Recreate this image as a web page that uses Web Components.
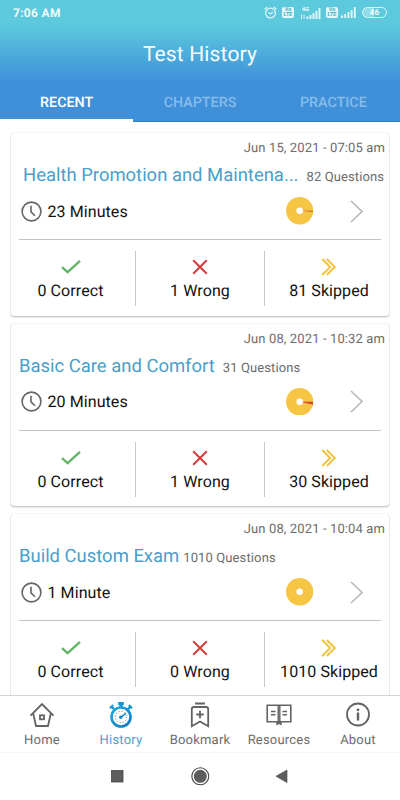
<!DOCTYPE html>
<html lang="en">
<head>
<meta charset="utf-8">
<meta name="viewport" content="width=device-width, initial-scale=1">
<title>Test History</title>
<style>
  html, body { height: 100%; }
  body {
    margin: 0;
    overflow: hidden;
    background: #fff;
    color: #111;
    font-family: Roboto, "Noto Sans", sans-serif;
    text-rendering: geometricPrecision;
  }
</style>
</head>
<body>
<history-app></history-app>

<script>
const tests = [
  {date: 'Jun 15, 2021 - 07:05 am', title: 'Health Promotion and Maintena...', questions: 82, time: '23 Minutes', correct: 0, wrong: 1, skipped: 81, full: true},
  {date: 'Jun 08, 2021 - 10:32 am', title: 'Basic Care and Comfort', questions: 31, time: '20 Minutes', correct: 0, wrong: 1, skipped: 30},
  {date: 'Jun 08, 2021 - 10:04 am', title: 'Build Custom Exam', questions: 1010, time: '1 Minute', correct: 0, wrong: 0, skipped: 1010, tight: true}
];

const icons = {
  correct: '<svg width="20" height="16" viewBox="0 0 20 16" fill="none" stroke="#61b565" stroke-width="2.3"><path d="M1 8.2 6.6 13.2 19 1.8"/></svg>',
  wrong: '<svg width="16" height="16" viewBox="0 0 16 16" fill="none" stroke="#d83a3a" stroke-width="2"><path d="M1.2 1.2 14.8 14.8M14.8 1.2 1.2 14.8"/></svg>',
  skipped: '<svg width="16" height="18" viewBox="0 0 16 18" fill="none" stroke="#f0c23e" stroke-width="1.9"><path d="M1.2 1 9.2 9 1.2 17M5.8 1 13.8 9 5.8 17"/></svg>',
  home: '<svg width="26" height="26" viewBox="0 0 26 26" fill="none" stroke="#636363" stroke-width="1.8"><path d="M1.5 13.6 13 2 24.5 13.6M4.2 11.5 7 24H19L21.8 11.5"/><rect x="11" y="13.3" width="4" height="4"/></svg>',
  history: `<svg width="26" height="28" viewBox="0 0 26 28" fill="none">
      <defs><linearGradient id="g" x1="0" y1="0" x2="1" y2="1"><stop offset="0" stop-color="#25a9e0"/><stop offset="1" stop-color="#0b78bd"/></linearGradient></defs>
      <path d="M10.2 1H15.8V4H14.7V6.2H11.3V4H10.2Z" fill="#1896d3"/>
      <path d="m2 7.3 3.2-3.2M24 7.3l-3.2-3.2M4 6l2.2 2.4M22 6l-2.2 2.4" stroke="#1896d3" stroke-width="2.2"/>
      <circle cx="13" cy="16" r="9.5" fill="#fff" stroke="url(#g)" stroke-width="2.6"/>
      <circle cx="13" cy="16" r="5.7" stroke="#2287be" stroke-width="1" stroke-dasharray="1 1.98"/>
      <path d="m12.6 16.3 5.3-3.9" stroke="#1687c7" stroke-width="1.5"/><circle cx="12.7" cy="16.3" r="1.7" fill="#1687c7"/></svg>`,
  bookmark: '<svg width="20" height="26" viewBox="0 0 20 26" fill="none" stroke="#636363" stroke-width="1.8"><path d="M5 1.5H15M1.8 24.3V7.3Q1.8 5 4 5H16Q18.2 5 18.2 7.3V24.3L10 19.5ZM10 8.8V16.2M6.3 12.5H13.7"/></svg>',
  resources: '<svg width="26" height="26" viewBox="0 0 26 26" fill="none" stroke="#636363" stroke-width="1.6"><path d="M1.2 3.2H24.8V19.8H1.2ZM13 3.2V19.8"/><path d="M12 3.5V20M14 3.5V20" stroke-width="1"/><path d="M5 9.5H9.5M5 12.8H9.5M16.5 9.5H21M16.5 12.8H21" stroke-width="1.4"/><path d="M10.3 20H15.7V23.6L13 22 10.3 23.6Z" fill="#636363" stroke="none"/></svg>',
  about: '<svg width="26" height="26" viewBox="0 0 26 26" fill="none" stroke="#636363" stroke-width="1.8"><circle cx="13" cy="12.5" r="11"/><path d="M13 11.5V17.5" stroke-width="2.4" stroke-linecap="round"/><circle cx="13" cy="7.8" r="1.4" fill="#636363" stroke="none"/></svg>'
};

class StatusBar extends HTMLElement {
  constructor() {
    super();
    this.attachShadow({mode: 'open'}).innerHTML = `
      <style>
        :host { display: flex; align-items: center; justify-content: space-between; height: 25px; padding: 0 13px; color: #effcff; }
        .time { font-size: 12px; font-weight: 700; letter-spacing: .3px; }
        .icons { display: flex; align-items: center; }
        svg { display: block; }
        .volte { display: flex; flex-direction: column; box-sizing: border-box; width: 12px; height: 11px; padding-top: 1px; border-radius: 2px; background: #e2f8fb; color: #43adbd; font-size: 5.5px; line-height: 5px; font-weight: 700; text-align: center; }
        .net { display: flex; flex-direction: column; width: 21px; margin: 0 5px 0 6px; }
        .net span { font-size: 5.5px; line-height: 6px; height: 4px; padding-left: 2px; font-weight: 700; }
        .net svg { margin-top: -3px; }
        .bars { margin-left: 3px; }
        .battery { box-sizing: border-box; width: 25px; height: 11px; margin-left: 6px; border: 1px solid #e2f8fb; border-radius: 6px; background: linear-gradient(90deg, #8fdce8 46%, transparent 46%); font-size: 8.5px; line-height: 11px; font-weight: 700; text-align: center; }
      </style>
      <span class="time">7:06 AM</span>
      <div class="icons">
        <svg width="13" height="13" viewBox="0 0 13 13" fill="none" stroke="#e2f8fb" stroke-width="1.2"><circle cx="6.5" cy="7" r="4.9"/><path d="M.6 3.2 3.4.9M12.4 3.2 9.6.9M4.4 6.3 6.5 8 8.8 6.3"/></svg>
        <span class="volte" style="margin-left:5px"><span>Vo</span><span>LTE</span></span>
        <div class="net">
          <span>4G</span>
          <svg width="21" height="11" viewBox="0 0 21 11" stroke="#e2f8fb"><path d="M1.5 6.5V11M4 6.5V11" stroke-width="1"/><path d="M7.5 8.5V11M10.5 7V11M13.5 5V11M16.5 3V11M19.5 0V11" stroke-width="1.9"/></svg>
        </div>
        <span class="volte"><span>Vo</span><span>LTE</span></span>
        <svg class="bars" width="15" height="11" viewBox="0 0 15 11" stroke="#e2f8fb"><path d="M1 8.5V11M4.2 7V11M7.4 5V11M10.6 3V11M13.8 0V11" stroke-width="1.9"/></svg>
        <span class="battery">46</span>
      </div>`;
  }
}
customElements.define('status-bar', StatusBar);

class AppHeader extends HTMLElement {
  constructor() {
    super();
    this.attachShadow({mode: 'open'}).innerHTML = `
      <style>
        :host { display: flex; flex-direction: column; height: 122px; flex: none; background: linear-gradient(#5cc9dc 0, #5cc9dc 25px, #3f90d9 82px); }
        h1 { margin: 0; height: 55px; line-height: 60px; text-align: center; color: #f4fcff; font-size: 21px; font-weight: 400; letter-spacing: .15px; }
        nav { display: grid; grid-template-columns: repeat(3, 1fr); flex: 1; }
        nav span { display: flex; align-items: center; justify-content: center; padding-top: 5px; border-bottom: 1px solid #2f7fc6; color: #85bce9; font-size: 14.3px; font-weight: 500; }
        nav .active { padding-top: 7px; border-bottom: 3px solid #fff; color: #fff; }
      </style>
      <status-bar></status-bar>
      <h1>Test History</h1>
      <nav><span class="active">RECENT</span><span>CHAPTERS</span><span>PRACTICE</span></nav>`;
  }
}
customElements.define('app-header', AppHeader);

class ResultStat extends HTMLElement {
  connectedCallback() {
    this.attachShadow({mode: 'open'}).innerHTML = `
      <style>
        :host { display: flex; flex-direction: column; align-items: center; height: 55px; box-sizing: border-box; font-size: 16px; letter-spacing: .08px; white-space: nowrap; }
        .icon { display: flex; align-items: center; height: 32px; }
        .label { line-height: 16px; }
      </style>
      <div class="icon">${icons[this.getAttribute('type')]}</div>
      <div class="label"><slot></slot></div>`;
  }
}
customElements.define('result-stat', ResultStat);

class HistoryCard extends HTMLElement {
  constructor() {
    super();
    this._shadowRoot = this.attachShadow({mode: 'open'});
  }

  set test(test) {
    this._test = test;
    this.render();
  }

  render() {
    const t = this._test;
    // the wrong slice starts at three o'clock and runs clockwise
    const slice = t.wrong / t.questions * 2 * Math.PI;
    const x = 13.7 + 13.7 * Math.cos(slice);
    const y = 13.7 + 13.7 * Math.sin(slice);
    this._shadowRoot.innerHTML = `
      <style>
        :host { display: flex; flex-direction: column; box-sizing: border-box; flex: none; height: 182.5px; border-radius: 3px; background: #fff; box-shadow: 0 1px 2px rgba(0, 0, 0, .28), 0 0 1px rgba(0, 0, 0, .2); }
        .date { height: 30px; line-height: 32px; padding-right: 4px; text-align: right; color: #6c6c6c; font-size: 13px; letter-spacing: .12px; }
        .head { display: flex; align-items: baseline; height: 24px; line-height: 24px; padding-left: 8px; white-space: nowrap; }
        .head.full { padding-left: 12px; }
        h2 { margin: 0; color: #4a9fca; font-size: 18.45px; font-weight: 400; }
        .count { margin-left: 8px; color: #6c6c6c; font-size: 13px; letter-spacing: .12px; }
        .tight .count { margin-left: 4px; }
        .row { display: flex; align-items: center; height: 48px; padding: 0 26px 4px 10px; font-size: 16px; letter-spacing: .08px; }
        .clock { margin-right: 5.5px; }
        .pie { margin-left: auto; margin-right: 37px; }
        .stats { display: grid; grid-template-columns: 116px 129px 117px; margin: 0 8px; padding-top: 11px; border-top: 1px solid #c3c3c3; }
        result-stat + result-stat { border-left: 1px solid #c8c8c8; }
        result-stat:first-child { margin-left: -13px; }
        result-stat:last-child { padding-left: 12px; }
      </style>
      <div class="date">${t.date}</div>
      <div class="head ${t.full ? 'full' : ''} ${t.tight ? 'tight' : ''}"><h2>${t.title}</h2><span class="count">${t.questions} Questions</span></div>
      <div class="row">
        <svg class="clock" width="21" height="21" viewBox="0 0 21 21" fill="none" stroke="#666" stroke-width="1.6"><circle cx="10.5" cy="10.5" r="9.4"/><path d="M10 4.8V10.8L14 14.8"/></svg>
        <span>${t.time}</span>
        <svg class="pie" width="27.4" height="27.4" viewBox="0 0 27.4 27.4"><circle cx="13.7" cy="13.7" r="13.7" fill="#f6c544"/><path d="M13.7 13.7H27.4A13.7 13.7 0 0 1 ${x} ${y}Z" fill="#d8402f"/><circle cx="13.7" cy="13.7" r="3.3" fill="#fff"/></svg>
        <svg width="13" height="23" viewBox="0 0 13 23" fill="none" stroke="#b9b9b9" stroke-width="1.6"><path d="M1 1 12 11.5 1 22"/></svg>
      </div>
      <div class="stats">
        <result-stat type="correct">${t.correct} Correct</result-stat>
        <result-stat type="wrong">${t.wrong} Wrong</result-stat>
        <result-stat type="skipped">${t.skipped} Skipped</result-stat>
      </div>`;
  }
}
customElements.define('history-card', HistoryCard);

class NavItem extends HTMLElement {
  connectedCallback() {
    this.attachShadow({mode: 'open'}).innerHTML = `
      <style>
        :host { display: flex; flex-direction: column; align-items: center; color: #6c6c6c; font-size: 13px; letter-spacing: .2px; }
        :host([active]) { color: #4a9fca; }
        .icon { display: flex; align-items: center; justify-content: center; height: 28px; margin-top: 5px; }
        .label { line-height: 20px; margin-top: 2px; }
      </style>
      <div class="icon">${icons[this.getAttribute('icon')]}</div>
      <div class="label"><slot></slot></div>`;
  }
}
customElements.define('nav-item', NavItem);

class BottomNav extends HTMLElement {
  constructor() {
    super();
    this.attachShadow({mode: 'open'}).innerHTML = `
      <style>
        :host { display: grid; grid-template-columns: repeat(5, 79px); justify-content: center; box-sizing: border-box; flex: none; height: 58px; border-top: 1px solid #d4d4d4; border-bottom: 1px solid #f5f5f5; background: #fff; }
      </style>
      <nav-item icon="home">Home</nav-item>
      <nav-item icon="history" active>History</nav-item>
      <nav-item icon="bookmark">Bookmark</nav-item>
      <nav-item icon="resources">Resources</nav-item>
      <nav-item icon="about">About</nav-item>`;
  }
}
customElements.define('bottom-nav', BottomNav);

class SystemKeys extends HTMLElement {
  constructor() {
    super();
    this.attachShadow({mode: 'open'}).innerHTML = `
      <style>
        :host { display: flex; align-items: center; justify-content: center; flex: none; height: 47px; background: #fff; }
        svg { display: block; margin-top: -2px; }
      </style>
      <svg width="184" height="20" viewBox="0 0 184 20" fill="#5d5d5d">
        <rect x="3.5" y="4.5" width="11.5" height="11.5" stroke="#484848" stroke-width=".8"/>
        <circle cx="92.3" cy="10.3" r="8.5" fill="none" stroke="#484848" stroke-width="1.1"/><circle cx="92.3" cy="10.3" r="6.5"/>
        <path d="M179 4V16.6L168 10.3Z" stroke="#484848" stroke-width=".6"/>
      </svg>`;
  }
}
customElements.define('system-keys', SystemKeys);

class HistoryApp extends HTMLElement {
  constructor() {
    super();
    this._shadowRoot = this.attachShadow({mode: 'open'});
    this._shadowRoot.innerHTML = `
      <style>
        :host { display: flex; flex-direction: column; height: 100vh; }
        main { display: flex; flex-direction: column; gap: 8px; flex: 1; min-height: 0; padding: 11px 11px 0; overflow: hidden; }
      </style>
      <app-header></app-header>
      <main></main>
      <bottom-nav></bottom-nav>
      <system-keys></system-keys>`;
    const main = this._shadowRoot.querySelector('main');
    tests.forEach(test => {
      const card = document.createElement('history-card');
      card.test = test;
      main.appendChild(card);
    });
  }
}
customElements.define('history-app', HistoryApp);
</script>
</body>
</html>
